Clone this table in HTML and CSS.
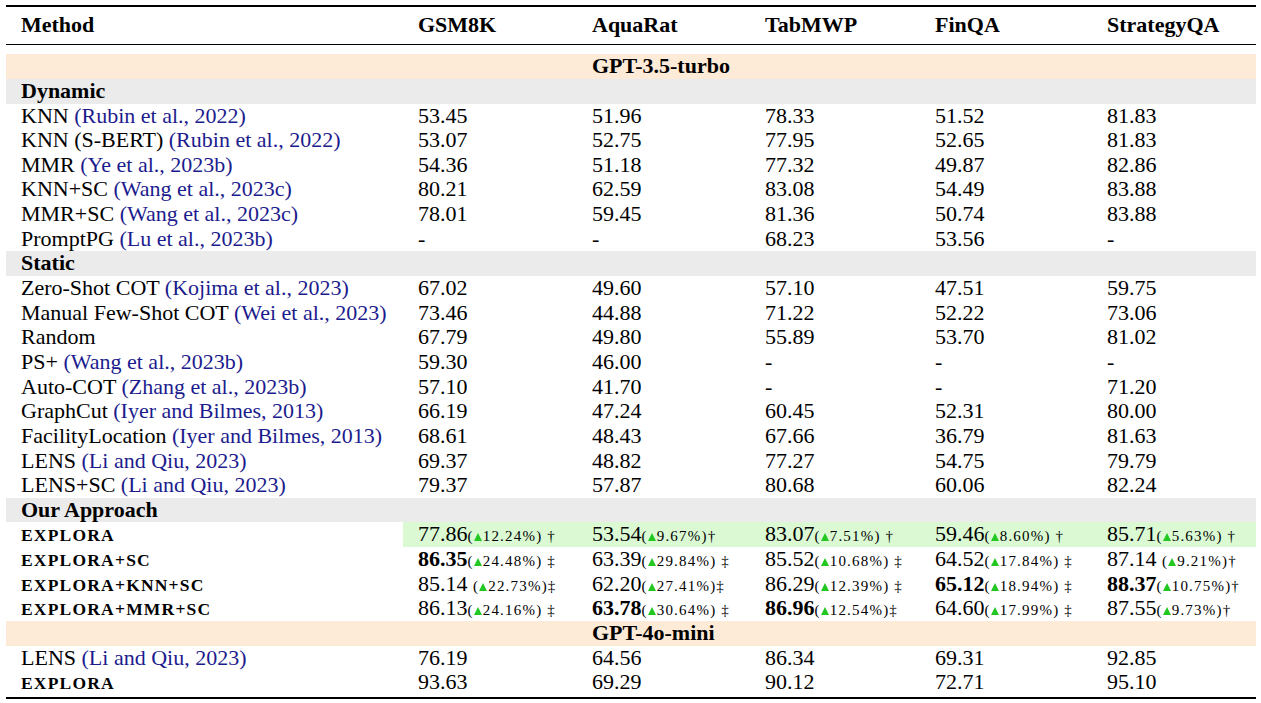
FILE: index.html
```html
<!DOCTYPE html>
<html lang="en">
<head>
<meta charset="utf-8">
<title>Results table</title>
<link rel="stylesheet" href="styles.css">
</head>
<body>
<div class="table">
  <div class="row head">
    <div class="cell">Method</div>
    <div class="cell">GSM8K</div>
    <div class="cell">AquaRat</div>
    <div class="cell">TabMWP</div>
    <div class="cell">FinQA</div>
    <div class="cell">StrategyQA</div>
  </div>
  <div class="midrule"></div>

  <div class="row band-model"><div class="cell col3">GPT-3.5-turbo</div></div>
  <div class="row band-group"><div class="cell">Dynamic</div></div>
  <div class="row"><div class="cell">KNN <span class="cite">(Rubin et al., 2022)</span></div><div class="cell">53.45</div><div class="cell">51.96</div><div class="cell">78.33</div><div class="cell">51.52</div><div class="cell">81.83</div></div>
  <div class="row"><div class="cell">KNN (S-BERT) <span class="cite">(Rubin et al., 2022)</span></div><div class="cell">53.07</div><div class="cell">52.75</div><div class="cell">77.95</div><div class="cell">52.65</div><div class="cell">81.83</div></div>
  <div class="row"><div class="cell">MMR <span class="cite">(Ye et al., 2023b)</span></div><div class="cell">54.36</div><div class="cell">51.18</div><div class="cell">77.32</div><div class="cell">49.87</div><div class="cell">82.86</div></div>
  <div class="row"><div class="cell">KNN+SC <span class="cite">(Wang et al., 2023c)</span></div><div class="cell">80.21</div><div class="cell">62.59</div><div class="cell">83.08</div><div class="cell">54.49</div><div class="cell">83.88</div></div>
  <div class="row"><div class="cell">MMR+SC <span class="cite">(Wang et al., 2023c)</span></div><div class="cell">78.01</div><div class="cell">59.45</div><div class="cell">81.36</div><div class="cell">50.74</div><div class="cell">83.88</div></div>
  <div class="row"><div class="cell">PromptPG <span class="cite">(Lu et al., 2023b)</span></div><div class="cell">-</div><div class="cell">-</div><div class="cell">68.23</div><div class="cell">53.56</div><div class="cell">-</div></div>
  <div class="row band-group"><div class="cell">Static</div></div>
  <div class="row"><div class="cell">Zero-Shot COT <span class="cite">(Kojima et al., 2023)</span></div><div class="cell">67.02</div><div class="cell">49.60</div><div class="cell">57.10</div><div class="cell">47.51</div><div class="cell">59.75</div></div>
  <div class="row"><div class="cell">Manual Few-Shot COT <span class="cite">(Wei et al., 2023)</span></div><div class="cell">73.46</div><div class="cell">44.88</div><div class="cell">71.22</div><div class="cell">52.22</div><div class="cell">73.06</div></div>
  <div class="row"><div class="cell">Random</div><div class="cell">67.79</div><div class="cell">49.80</div><div class="cell">55.89</div><div class="cell">53.70</div><div class="cell">81.02</div></div>
  <div class="row"><div class="cell">PS+ <span class="cite">(Wang et al., 2023b)</span></div><div class="cell">59.30</div><div class="cell">46.00</div><div class="cell">-</div><div class="cell">-</div><div class="cell">-</div></div>
  <div class="row"><div class="cell">Auto-COT <span class="cite">(Zhang et al., 2023b)</span></div><div class="cell">57.10</div><div class="cell">41.70</div><div class="cell">-</div><div class="cell">-</div><div class="cell">71.20</div></div>
  <div class="row"><div class="cell">GraphCut <span class="cite">(Iyer and Bilmes, 2013)</span></div><div class="cell">66.19</div><div class="cell">47.24</div><div class="cell">60.45</div><div class="cell">52.31</div><div class="cell">80.00</div></div>
  <div class="row"><div class="cell">FacilityLocation <span class="cite">(Iyer and Bilmes, 2013)</span></div><div class="cell">68.61</div><div class="cell">48.43</div><div class="cell">67.66</div><div class="cell">36.79</div><div class="cell">81.63</div></div>
  <div class="row"><div class="cell">LENS <span class="cite">(Li and Qiu, 2023)</span></div><div class="cell">69.37</div><div class="cell">48.82</div><div class="cell">77.27</div><div class="cell">54.75</div><div class="cell">79.79</div></div>
  <div class="row"><div class="cell">LENS+SC <span class="cite">(Li and Qiu, 2023)</span></div><div class="cell">79.37</div><div class="cell">57.87</div><div class="cell">80.68</div><div class="cell">60.06</div><div class="cell">82.24</div></div>
  <div class="row band-group"><div class="cell">Our Approach</div></div>
  <div class="row">
    <div class="cell"><span class="sc">EXPLORA</span></div>
    <div class="cell hl">77.86<span class="small">(<i class="up"></i>12.24%) †</span></div>
    <div class="cell hl">53.54<span class="small">(<i class="up"></i>9.67%)†</span></div>
    <div class="cell hl">83.07<span class="small">(<i class="up"></i>7.51%) †</span></div>
    <div class="cell hl">59.46<span class="small">(<i class="up"></i>8.60%) †</span></div>
    <div class="cell hl">85.71<span class="small">(<i class="up"></i>5.63%) †</span></div>
  </div>
  <div class="row">
    <div class="cell"><span class="sc">EXPLORA+SC</span></div>
    <div class="cell"><b>86.35</b><span class="small">(<i class="up"></i>24.48%) ‡</span></div>
    <div class="cell">63.39<span class="small">(<i class="up"></i>29.84%) ‡</span></div>
    <div class="cell">85.52<span class="small">(<i class="up"></i>10.68%) ‡</span></div>
    <div class="cell">64.52<span class="small">(<i class="up"></i>17.84%) ‡</span></div>
    <div class="cell">87.14 <span class="small">(<i class="up"></i>9.21%)†</span></div>
  </div>
  <div class="row">
    <div class="cell"><span class="sc">EXPLORA+KNN+SC</span></div>
    <div class="cell">85.14 <span class="small">(<i class="up"></i>22.73%)‡</span></div>
    <div class="cell">62.20<span class="small">(<i class="up"></i>27.41%)‡</span></div>
    <div class="cell">86.29<span class="small">(<i class="up"></i>12.39%) ‡</span></div>
    <div class="cell"><b>65.12</b><span class="small">(<i class="up"></i>18.94%) ‡</span></div>
    <div class="cell"><b>88.37</b><span class="small">(<i class="up"></i>10.75%)†</span></div>
  </div>
  <div class="row">
    <div class="cell"><span class="sc">EXPLORA+MMR+SC</span></div>
    <div class="cell">86.13<span class="small">(<i class="up"></i>24.16%) ‡</span></div>
    <div class="cell"><b>63.78</b><span class="small">(<i class="up"></i>30.64%) ‡</span></div>
    <div class="cell"><b>86.96</b><span class="small">(<i class="up"></i>12.54%)‡</span></div>
    <div class="cell">64.60<span class="small">(<i class="up"></i>17.99%) ‡</span></div>
    <div class="cell">87.55<span class="small">(<i class="up"></i>9.73%)†</span></div>
  </div>
  <div class="row band-model"><div class="cell col3">GPT-4o-mini</div></div>
  <div class="row"><div class="cell">LENS <span class="cite">(Li and Qiu, 2023)</span></div><div class="cell">76.19</div><div class="cell">64.56</div><div class="cell">86.34</div><div class="cell">69.31</div><div class="cell">92.85</div></div>
  <div class="row"><div class="cell"><span class="sc">EXPLORA</span></div><div class="cell">93.63</div><div class="cell">69.29</div><div class="cell">90.12</div><div class="cell">72.71</div><div class="cell">95.10</div></div>
  <div class="bottomrule"></div>
</div>
</body>
</html>
```

FILE: styles.css
```css
html, body {
  margin: 0;
  padding: 0;
  background: #ffffff;
}

body {
  font-family: "Liberation Serif", "Times New Roman", serif;
  color: #000000;
}

.table {
  margin: 5px 0 0 6px;
  width: 1250px;
  border-top: 2px solid #000000;
}

.row {
  display: grid;
  grid-template-columns: 397px 174px 173px 170px 172px 164px;
  height: 24.65px;
  line-height: 24.65px;
  font-size: 22px;
  white-space: nowrap;
}

.cell {
  padding-left: 15px;
}

.col3 {
  grid-column: 3;
}

.head {
  margin-top: 6.25px;
  font-weight: bold;
}

.midrule {
  margin-top: 6.4px;
  margin-bottom: 9px;
  border-top: 1.5px solid #000000;
}

.band-model {
  background: #fdebd8;
  font-weight: bold;
}

.band-group {
  background: #ebebeb;
  font-weight: bold;
}

.cite {
  color: #1c1c8e;
}

.hl {
  background: #dbfad4;
}

.sc {
  font-size: 17.5px;
  font-weight: bold;
  letter-spacing: 1.2px;
  line-height: 1;
}

.small {
  font-size: 15px;
  letter-spacing: 1.2px;
  line-height: 1;
}

.up {
  display: inline-block;
  width: 0;
  height: 0;
  border-left: 4px solid transparent;
  border-right: 4px solid transparent;
  border-bottom: 8px solid #22c722;
  margin: 0 1px 0 0;
}

.bottomrule {
  margin-top: 2px;
  border-top: 2.5px solid #000000;
}
```
